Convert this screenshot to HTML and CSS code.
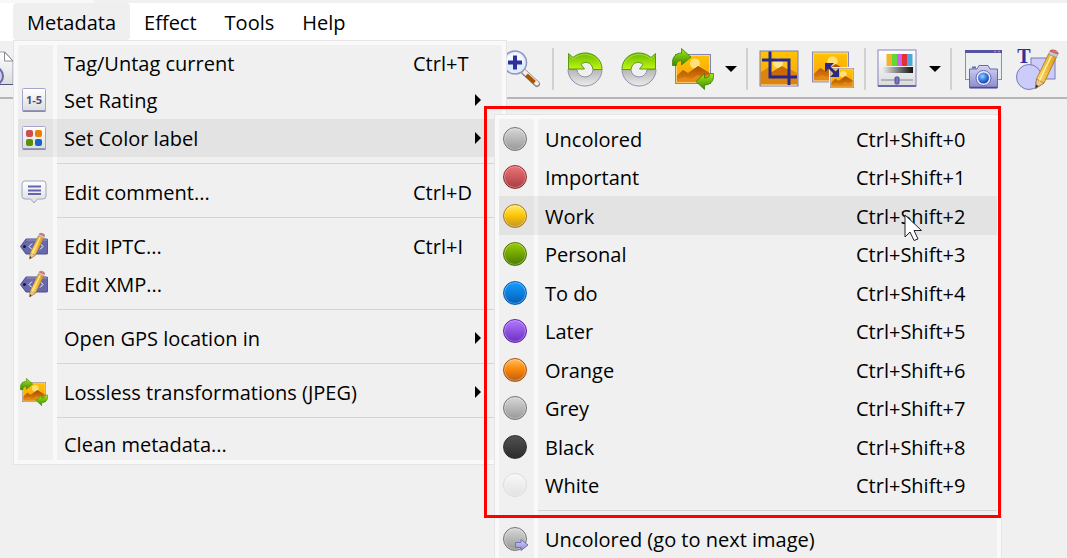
FILE: index.html
```html
<!DOCTYPE html>
<html lang="en">
<head>
    <meta charset="UTF-8">
    <meta name="viewport" content="width=device-width, initial-scale=1.0">
    <title>Metadata menu</title>
    <link rel="stylesheet" href="styles.css">
</head>
<body>
    <!-- Shared icons -->
    <svg class="defs" aria-hidden="true">
        <defs>
            <linearGradient id="green" x1="0" y1="0" x2="0" y2="1">
                <stop offset="0" stop-color="#6cb800"/><stop offset="1" stop-color="#c0f810"/>
            </linearGradient>
            <linearGradient id="greenDark" x1="0" y1="0" x2="0" y2="1">
                <stop offset="0" stop-color="#a2e81c"/><stop offset="1" stop-color="#3f8a00"/>
            </linearGradient>
            <linearGradient id="silver" x1="0" y1="0" x2="0" y2="1">
                <stop offset="0" stop-color="#b5b5b5"/><stop offset="1" stop-color="#ececec"/>
            </linearGradient>
            <linearGradient id="sky" x1="0" y1="0" x2="0" y2="1">
                <stop offset="0" stop-color="#ffc400"/><stop offset="1" stop-color="#f9a010"/>
            </linearGradient>
            <linearGradient id="hill" x1="0" y1="0" x2="0" y2="1">
                <stop offset="0" stop-color="#a84a00"/><stop offset="1" stop-color="#e88a10"/>
            </linearGradient>
            <linearGradient id="paper" x1="0" y1="0" x2="0" y2="1">
                <stop offset="0" stop-color="#ffffff"/><stop offset="1" stop-color="#d9dcde"/>
            </linearGradient>
            <linearGradient id="violet" x1="0" y1="0" x2="0" y2="1">
                <stop offset="0" stop-color="#d4d4f6"/><stop offset="1" stop-color="#8b8bcc"/>
            </linearGradient>
            <linearGradient id="grey" x1="0" y1="0" x2="1" y2="0">
                <stop offset="0" stop-color="#f0f0f0"/><stop offset="1" stop-color="#111111"/>
            </linearGradient>
            <linearGradient id="pencilBody" x1="0" y1="0" x2="1" y2="0">
                <stop offset="0" stop-color="#ffe070"/><stop offset="1" stop-color="#e09c18"/>
            </linearGradient>
            <radialGradient id="lens" cx="0.4" cy="0.35" r="0.7">
                <stop offset="0" stop-color="#9fd0ff"/><stop offset="0.5" stop-color="#3a80e8"/><stop offset="1" stop-color="#123a9c"/>
            </radialGradient>
        </defs>

        <symbol id="i-picture" viewBox="0 0 36 30">
            <rect x="0.5" y="0.5" width="35" height="29" fill="url(#sky)" stroke="#8484bc"/>
            <circle cx="20" cy="9.500" r="5" fill="#ffe07a"/>
            <path d="M1.500 22L8 16l5 3 10-7 12 7v9.500H1.500z" fill="url(#hill)"/>
            <path d="M1.500 28.500V26l8-3 7 2 6-4 5 2 7-3v8.500z" fill="#e28a14"/>
            <path d="M1.500 28.500V1.500h33v27z" fill="none" stroke="#fff0b0" stroke-opacity="0.600"/>
        </symbol>
        <symbol id="i-transform" viewBox="0 0 42 42">
            <use href="#i-picture" x="3" y="6" width="36" height="30"/>
            <path d="M0.500 17.500C-0.500 9 4 5 9.500 5V0.500L19 9l-9.500 8v-4.500c-4 0-5 2-5 5z" fill="url(#greenDark)" stroke="#3a8400" stroke-width="0.800"/>
            <path d="M41.500 25.500c1 8-3.500 11.500-9 11.500v4.500L24 33.500l8.500-8V30c4 0 5-1.500 5-4.500z" fill="url(#greenDark)" stroke="#3a8400" stroke-width="0.800"/>
        </symbol>
        <symbol id="i-rotate" viewBox="0 0 42 42">
            <path d="M4 21.500a17 16.500 0 0 0 34 0h-9a8 7.500 0 0 1-16 0z" fill="url(#silver)" stroke="#9090b0"/>
            <path d="M4.500 5.500L9 9.500C20 0 38 6 38 21.500h-9C28 14 21 12.500 17 16.500l3.500 4.500H4.500z" fill="url(#green)" stroke="#5a9a10"/>
            <path d="M5.500 7.500L9 11c9-8 24-5 27.500 7" fill="none" stroke="#b8f050" stroke-opacity="0.600"/>
        </symbol>
        <symbol id="i-pencil" viewBox="0 0 24 40">
            <path d="M1 39.500L2 30 14 5l8 3L9.500 34z" fill="url(#pencilBody)" stroke="#a87018" stroke-width="0.800"/>
            <path d="M1 39.500L2 30l7.500 4z" fill="#e8c890" stroke="#94622a" stroke-width="0.600"/>
            <path d="M1 39.500l0.500-4L4 37z" fill="#333"/>
            <path d="M5 31.500L17 6.500" stroke="#fff3a8" stroke-width="1.500"/>
            <path d="M14 5l1.500-3 8 3L22 8.500z" fill="#c8c8cc" stroke="#8a8a90" stroke-width="0.500"/>
            <path d="M15.500 2c1.500-2.500 9 0 8 3z" fill="#e87878" stroke="#c85858"/>
        </symbol>
        <symbol id="i-tag" viewBox="0 0 28 28">
            <path d="M0.500 14.500L6 7h20.500q1.500 0 1.500 1.500v12q0 1.500-1.500 1.500H6z" fill="#6868ac" stroke="#4c4c8c"/>
            <path d="M6.500 8H27" stroke="#9696cc"/>
            <circle cx="4.500" cy="14.500" r="1.500" fill="#17172e"/>
            <path d="M12 11.500l-3 3 3 3M20 11.500l3 3-3 3" fill="none" stroke="#fff"/>
            <use href="#i-pencil" x="9" y="0" width="16" height="28"/>
        </symbol>
        <symbol id="i-frame" viewBox="0 0 24 24">
            <rect x="0.500" y="0.500" width="23" height="23" rx="1" fill="url(#paper)" stroke="#a4a4cc"/>
            <path d="M1 23h22.500" stroke="#8080b0" stroke-width="1.500"/>
        </symbol>
    </svg>

    <div class="title-strip"></div>

    <nav class="menubar">
        <div class="menubar-item">
            <button class="menubar-btn open" type="button">Metadata</button>

            <ul class="menu metadata-menu">
                <li>
                    <button class="menu-row first" type="button">
                        <span class="icon"></span><span class="label">Tag/Untag current</span><span class="shortcut">Ctrl+T</span>
                    </button>
                </li>
                <li>
                    <button class="menu-row" type="button">
                        <span class="icon">
                            <svg width="24" height="24" viewBox="0 0 24 24">
                                <use href="#i-frame" width="24" height="24"/>
                                <text class="rating-text" x="12" y="16" text-anchor="middle">1-5</text>
                            </svg>
                        </span>
                        <span class="label">Set Rating</span><span class="arrow"></span>
                    </button>
                </li>
                <li>
                    <button class="menu-row active" type="button">
                        <span class="icon">
                            <svg width="24" height="24" viewBox="0 0 24 24">
                                <use href="#i-frame" width="24" height="24"/>
                                <rect x="4" y="4" width="7" height="7" rx="2" fill="#d04c50"/>
                                <rect x="13" y="4" width="7" height="7" rx="2" fill="#e88000"/>
                                <rect x="4" y="13" width="7" height="7" rx="2" fill="#5c9000"/>
                                <rect x="13" y="13" width="7" height="7" rx="2" fill="#1c60cc"/>
                            </svg>
                        </span>
                        <span class="label">Set Color label</span><span class="arrow"></span>
                    </button>

                    <ul class="menu color-menu">
                        <li><button class="menu-row" type="button"><span class="icon"><i class="dot grey"></i></span><span class="label">Uncolored</span><span class="shortcut">Ctrl+Shift+0</span></button></li>
                        <li><button class="menu-row" type="button"><span class="icon"><i class="dot red"></i></span><span class="label">Important</span><span class="shortcut">Ctrl+Shift+1</span></button></li>
                        <li>
                            <button class="menu-row active" type="button"><span class="icon"><i class="dot yellow"></i></span><span class="label">Work</span><span class="shortcut">Ctrl+Shift+2</span></button>
                            <svg class="cursor" width="19" height="28" viewBox="0 0 19 28">
                                <path d="M1 1v22l5-5 4 8.500 4-1.500-4-8.500h7.500z" fill="#fff" stroke="#222230"/>
                            </svg>
                        </li>
                        <li><button class="menu-row" type="button"><span class="icon"><i class="dot green"></i></span><span class="label">Personal</span><span class="shortcut">Ctrl+Shift+3</span></button></li>
                        <li><button class="menu-row" type="button"><span class="icon"><i class="dot blue"></i></span><span class="label">To do</span><span class="shortcut">Ctrl+Shift+4</span></button></li>
                        <li><button class="menu-row" type="button"><span class="icon"><i class="dot purple"></i></span><span class="label">Later</span><span class="shortcut">Ctrl+Shift+5</span></button></li>
                        <li><button class="menu-row" type="button"><span class="icon"><i class="dot orange"></i></span><span class="label">Orange</span><span class="shortcut">Ctrl+Shift+6</span></button></li>
                        <li><button class="menu-row" type="button"><span class="icon"><i class="dot grey"></i></span><span class="label">Grey</span><span class="shortcut">Ctrl+Shift+7</span></button></li>
                        <li><button class="menu-row" type="button"><span class="icon"><i class="dot black"></i></span><span class="label">Black</span><span class="shortcut">Ctrl+Shift+8</span></button></li>
                        <li><button class="menu-row" type="button"><span class="icon"><i class="dot white"></i></span><span class="label">White</span><span class="shortcut">Ctrl+Shift+9</span></button></li>
                        <li class="separator"></li>
                        <li>
                            <button class="menu-row" type="button">
                                <span class="icon">
                                    <i class="dot grey"></i>
                                    <svg class="next-arrow" width="14" height="12" viewBox="0 0 14 12"><path d="M0.500 3.500H6v-3L13 6l-7 5.500v-3H0.500z" fill="url(#violet)" stroke="#7070b8"/></svg>
                                </span>
                                <span class="label">Uncolored (go to next image)</span>
                            </button>
                        </li>
                    </ul>
                    <div class="highlight-box"></div>
                </li>
                <li class="separator"></li>
                <li>
                    <button class="menu-row" type="button">
                        <span class="icon">
                            <svg width="26" height="24" viewBox="0 0 26 24">
                                <path d="M4 1h18q3 0 3 3v12q0 3-3 3h-5.500L13 23l-3.500-4H4q-3 0-3-3V4q0-3 3-3z" fill="url(#paper)" stroke="#a4a4bc"/>
                                <path d="M7 6.500h13M7 10.500h13M7 14h13" stroke="#6464b0" stroke-width="2"/>
                            </svg>
                        </span>
                        <span class="label">Edit comment...</span><span class="shortcut">Ctrl+D</span>
                    </button>
                </li>
                <li class="separator"></li>
                <li>
                    <button class="menu-row" type="button">
                        <span class="icon"><svg width="28" height="28"><use href="#i-tag"/></svg></span>
                        <span class="label">Edit IPTC...</span><span class="shortcut">Ctrl+I</span>
                    </button>
                </li>
                <li>
                    <button class="menu-row" type="button">
                        <span class="icon"><svg width="28" height="28"><use href="#i-tag"/></svg></span>
                        <span class="label">Edit XMP...</span>
                    </button>
                </li>
                <li class="separator"></li>
                <li><button class="menu-row" type="button"><span class="icon"></span><span class="label">Open GPS location in</span><span class="arrow"></span></button></li>
                <li class="separator"></li>
                <li>
                    <button class="menu-row" type="button">
                        <span class="icon"><svg width="28" height="28"><use href="#i-transform"/></svg></span>
                        <span class="label">Lossless transformations (JPEG)</span><span class="arrow"></span>
                    </button>
                </li>
                <li class="separator"></li>
                <li><button class="menu-row last" type="button"><span class="icon"></span><span class="label">Clean metadata...</span></button></li>
            </ul>
        </div>
        <div class="menubar-item"><button class="menubar-btn" type="button">Effect</button></div>
        <div class="menubar-item"><button class="menubar-btn" type="button">Tools</button></div>
        <div class="menubar-item"><button class="menubar-btn" type="button">Help</button></div>
    </nav>

    <div class="toolbar">
        <button class="tool preview" type="button" aria-label="Preview">
            <svg width="42" height="42" viewBox="0 0 42 42">
                <path d="M8 4h22l8 9v23.500H8z" fill="url(#paper)" stroke="#9a9ab0"/>
                <path d="M8 36.500h30" stroke="#55557c"/>
                <path d="M29.500 4v9H38z" fill="#fff" stroke="#8a8a94"/>
                <circle cx="19" cy="28" r="9" fill="#ccccf4" stroke="#6868a8" stroke-width="2"/>
            </svg>
        </button>
        <button class="tool zoom-in" type="button" aria-label="Zoom in">
            <svg width="42" height="42" viewBox="0 0 42 42">
                <path d="M24 24l13 12" stroke="#888" stroke-width="6" stroke-linecap="round"/>
                <path d="M24 23.500l13 12" stroke="#f8eee4" stroke-width="4" stroke-linecap="round"/>
                <path d="M26.500 27l8 7.500" stroke="#a85400" stroke-width="4"/>
                <circle cx="15" cy="14.500" r="11.500" fill="#dceefb" stroke="#9494c4" stroke-width="1.500"/>
                <path d="M6 14a9 9 0 0 1 18 0z" fill="#fff" fill-opacity="0.700"/>
                <path d="M15 7.500v14M8 14.500h14" stroke="#30309a" stroke-width="4"/>
            </svg>
        </button>
        <span class="divider"></span>
        <button class="tool" type="button" aria-label="Rotate left">
            <svg width="42" height="42"><use href="#i-rotate"/></svg>
        </button>
        <button class="tool" type="button" aria-label="Rotate right">
            <svg class="mirror" width="42" height="42"><use href="#i-rotate"/></svg>
        </button>
        <button class="tool" type="button" aria-label="Lossless transformations">
            <svg width="42" height="42"><use href="#i-transform"/></svg>
        </button>
        <button class="drop" type="button" aria-label="More transformations"></button>
        <span class="divider"></span>
        <button class="tool" type="button" aria-label="Crop">
            <svg width="42" height="42" viewBox="0 0 42 42">
                <rect x="2" y="3" width="38" height="35" fill="url(#sky)" stroke="#7c7cb4"/>
                <path d="M3 24l8-5 5 3 8-5 15 8v12H3z" fill="#dc8410"/>
                <rect x="12" y="12" width="19" height="17" fill="#ffc21a"/>
                <circle cx="20" cy="15" r="5" fill="#ffe68a"/>
                <path d="M12 25l12-7 7 4v7H12z" fill="#c86a08"/>
                <path d="M3 37h36" stroke="#f8e8b8"/>
                <path d="M12 3.500v25.500h27M4 12h27v25" fill="none" stroke="#28288c" stroke-width="3"/>
            </svg>
        </button>
        <button class="tool" type="button" aria-label="Resize">
            <svg width="42" height="42" viewBox="0 0 42 42">
                <use href="#i-picture" x="0" y="1" width="37" height="36"/>
                <rect x="17" y="19" width="25" height="21" fill="#f2f2f2"/>
                <use href="#i-picture" x="18" y="20" width="24" height="20"/>
                <path d="M16 18l8 8" stroke="#28288c" stroke-width="3"/>
                <path d="M13 15h9l-9 9zM27 29h-9l9-9z" fill="#28288c"/>
            </svg>
        </button>
        <span class="divider"></span>
        <button class="tool" type="button" aria-label="Adjust colors">
            <svg width="42" height="42" viewBox="0 0 42 42">
                <rect x="2" y="2" width="38" height="36" fill="url(#paper)" stroke="#8484bc"/>
                <path d="M2 38h38" stroke="#6868a4" stroke-width="2"/>
                <path d="M10.500 6h5.500v12h-5.500z" fill="#f4b428"/>
                <path d="M16 6h5v12h-5z" fill="#60d838"/>
                <path d="M21 6h5v12h-5z" fill="#d060e8"/>
                <path d="M26 6h5v12h-5z" fill="#e03038"/>
                <path d="M31 6h5.500v12H31z" fill="#48a8e0"/>
                <rect x="6" y="19" width="31" height="6" fill="url(#grey)"/>
                <path d="M5 32h32" stroke="#b4b4b4" stroke-width="2"/>
                <rect x="19" y="29" width="4" height="7" rx="1" fill="#7474b8" stroke="#5050a0"/>
            </svg>
        </button>
        <button class="drop" type="button" aria-label="More adjustments"></button>
        <span class="divider"></span>
        <button class="tool" type="button" aria-label="Capture">
            <svg width="42" height="42" viewBox="0 0 42 42">
                <rect x="3.500" y="2.500" width="36" height="29" fill="#eceff0" stroke="#8c8cb8"/>
                <path d="M3 3.500h37" stroke="#5454a0" stroke-width="3"/>
                <path d="M32 3.500h2M36 3.500h2" stroke="#e07080" stroke-width="1.500"/>
                <path d="M7.500 21H15l2-3.500h9l2 3.500h7.500v19h-28z" fill="url(#violet)" stroke="#6868ac"/>
                <path d="M8 39.500h27" stroke="#4c4c94" stroke-width="1.500"/>
                <path d="M10 19.500h4" stroke="#6868ac" stroke-width="2"/>
                <circle cx="21.500" cy="30" r="7.500" fill="#ececff" stroke="#6868ac"/>
                <circle cx="21.500" cy="30" r="5.500" fill="url(#lens)"/>
            </svg>
        </button>
        <button class="tool" type="button" aria-label="Draw">
            <svg class="draw" width="42" height="42" viewBox="0 0 42 42">
                <rect x="15" y="10" width="24" height="21" fill="#ccccfa" stroke="#7878b8"/>
                <circle cx="13" cy="29" r="12.500" fill="#ccccfa" stroke="#7878b8"/>
                <text class="draw-text" x="8" y="15" text-anchor="middle">T</text>
                <use href="#i-pencil" x="18" y="1" width="25" height="40"/>
            </svg>
        </button>
    </div>
</body>
</html>
```
FILE: styles.css
```css
* {
    margin: 0;
    padding: 0;
    box-sizing: border-box;
}

body {
    font-family: 'Open Sans', 'Noto Sans', sans-serif;
    font-size: 20px;
    line-height: 28px;
    color: #000;
    background: #f0f0f0;
    height: 100vh;
    overflow: hidden;
}

button {
    font: inherit;
    color: inherit;
    background: none;
    border: none;
    text-align: left;
}

ul {
    list-style: none;
}

svg {
    display: block;
    flex-shrink: 0;
}

.defs {
    position: absolute;
    width: 0;
    height: 0;
}

.title-strip {
    height: 3px;
    background: linear-gradient(to right, #f8f8f8 94px, #f0f0f0 94px);
}

/* Menu bar */
.menubar {
    display: flex;
    height: 38px;
    padding-left: 13px;
    background: #fff;
}

.menubar-item {
    position: relative;
}

.menubar-btn {
    display: block;
    height: 37px;
    padding: 2px 14px 0;
    border-radius: 4px;
    white-space: nowrap;
}

.menubar-btn.open {
    background: #efefef;
}

/* Drop-down menus */
.menu {
    position: absolute;
    padding: 4px;
    border: 1px solid #e5e5e5;
    background: #f9f9f9;
    z-index: 10;
}

.menu > li {
    position: relative;
    background: linear-gradient(to right, #f0f0f0 35px, #f9f9f9 35px, #f9f9f9 39px, #f0f0f0 39px);
}

.metadata-menu {
    top: 37px;
    left: 0;
    width: 494px;
}

.color-menu {
    top: -5px;
    left: 476px;
    width: 508px;
}

.menu-row {
    display: flex;
    align-items: center;
    width: 100%;
    height: 38px;
    white-space: nowrap;
}

.menu-row.first {
    height: 36px;
}

.menu-row.last {
    height: 33px;
}

.color-menu > li:nth-child(odd) > .menu-row {
    height: 39px;
}

.menu-row.active {
    background: rgba(0, 0, 0, 0.05);
}

.icon {
    position: relative;
    display: flex;
    align-items: center;
    justify-content: center;
    width: 32px;
    margin-right: 14px;
}

.label {
    flex: 1;
    padding-top: 2px;
}

.shortcut {
    width: 89px;
    padding-top: 2px;
}

.color-menu .shortcut {
    width: 141px;
}

.arrow {
    margin-right: 21px;
    border-left: 6px solid #000;
    border-top: 6px solid transparent;
    border-bottom: 6px solid transparent;
}

.separator {
    height: 16px;
    padding: 6px 0 0 39px;
}

.separator::before {
    content: '';
    display: block;
    height: 1px;
    background: #d4d4d4;
}

.rating-text {
    font-size: 11px;
    font-weight: 700;
    fill: #4c4c80;
}

/* Color labels */
.dot {
    width: 24px;
    height: 24px;
    border: 1px solid #777;
    border-radius: 50%;
    box-shadow: inset 0 0 0 1px rgba(255, 255, 255, 0.3);
}

.dot.grey {
    background: linear-gradient(#d8d8d8, #989898);
    border-color: #747474;
}

.dot.red {
    background: linear-gradient(#ee7478, #a83c40);
    border-color: #8c3034;
}

.dot.yellow {
    background: linear-gradient(#ffec70, #fcc808 45%, #c49420);
    border-color: #a87820;
}

.dot.green {
    background: linear-gradient(#98cc00, #4c7c00);
    border-color: #4c7400;
}

.dot.blue {
    background: linear-gradient(#189cff, #0060b8);
    border-color: #0858b0;
}

.dot.purple {
    background: linear-gradient(#b078ff, #6c30c0);
    border-color: #5c20a8;
}

.dot.orange {
    background: linear-gradient(#ffc060, #fc8808 45%, #b86018);
    border-color: #a85014;
}

.dot.black {
    background: linear-gradient(#505050, #2c2c2c);
    border-color: #303030;
    box-shadow: none;
}

.dot.white {
    background: linear-gradient(#f8f8f8, #e2e2e2);
    border-color: #dcdcdc;
}

.next-arrow {
    position: absolute;
    right: 2px;
    bottom: 0;
}

.cursor {
    position: absolute;
    top: 18px;
    left: 405px;
    z-index: 5;
}

.highlight-box {
    position: absolute;
    top: -13px;
    left: 466px;
    width: 517px;
    height: 412px;
    border: 3px solid #f00;
    z-index: 20;
    pointer-events: none;
}

/* Toolbar */
.toolbar {
    display: flex;
    align-items: center;
    height: 58px;
    border-bottom: 2px solid #b6b6b6;
    overflow: hidden;
}

.tool {
    flex-shrink: 0;
    width: 54px;
    padding: 0 6px;
}

.tool.preview {
    margin-left: -31px;
}

.tool.zoom-in {
    margin-left: 471px;
}

.mirror {
    transform: scaleX(-1);
}

.divider {
    flex-shrink: 0;
    width: 2px;
    height: 42px;
    margin: 0 4px;
    background: #d0d0d0;
}

.drop {
    flex-shrink: 0;
    width: 22px;
}

.drop::before {
    content: '';
    display: block;
    width: 0;
    margin: 0 auto;
    border-top: 6px solid #000;
    border-left: 6px solid transparent;
    border-right: 6px solid transparent;
}

.draw {
    overflow: visible;
}

.draw-text {
    font-family: 'Liberation Serif', serif;
    font-size: 20px;
    font-weight: 700;
    fill: #30309a;
}
```
